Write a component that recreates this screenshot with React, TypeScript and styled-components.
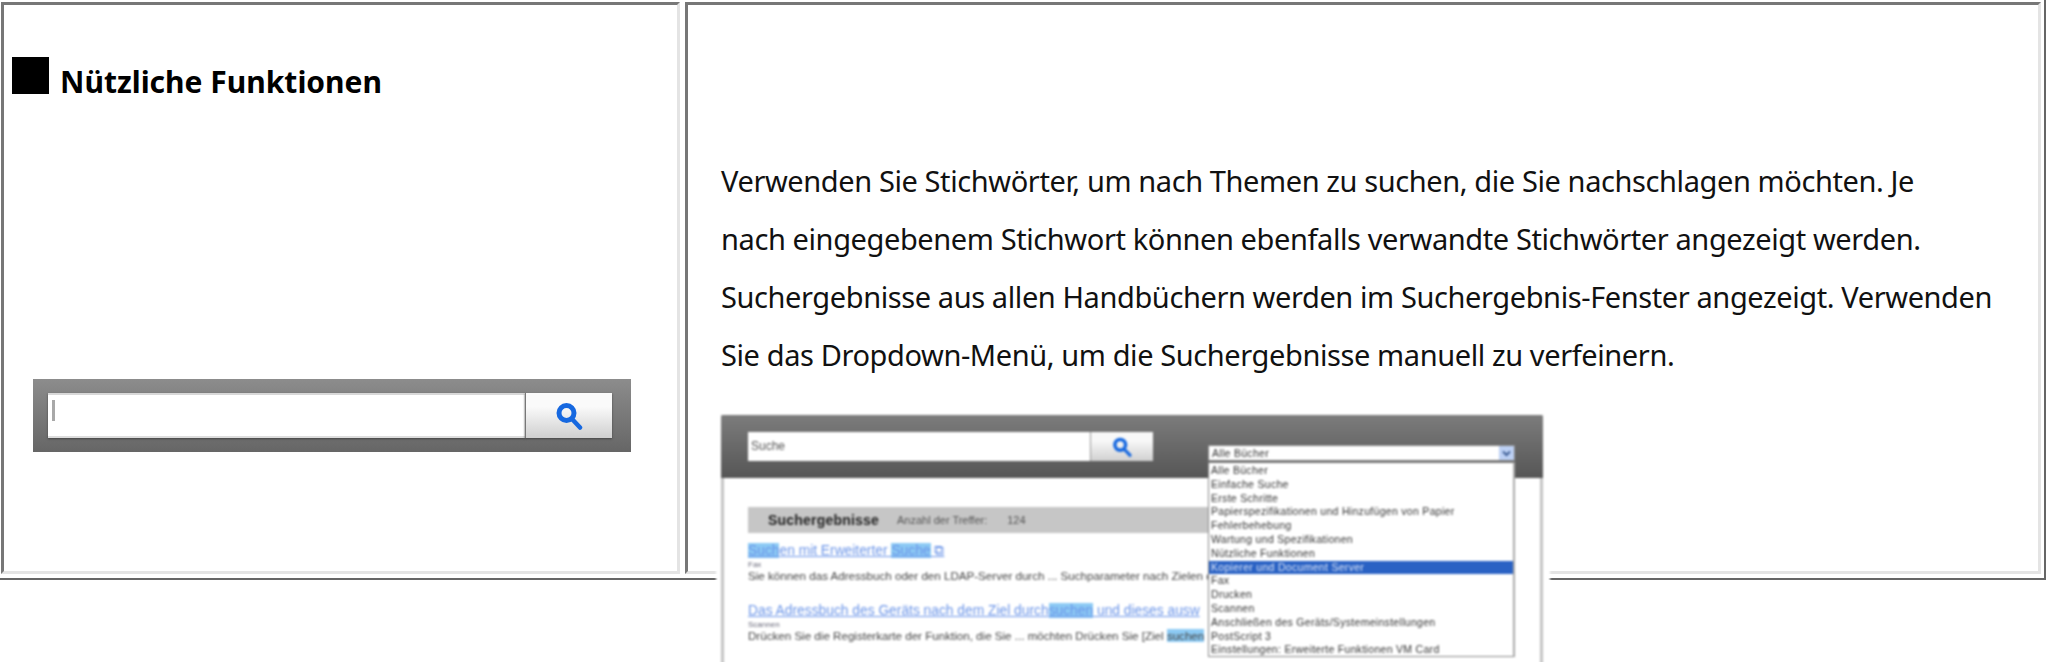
import { createGlobalStyle, styled } from "styled-components";

const GlobalStyle = createGlobalStyle`
html, body {
  margin: 0;
  padding: 0;
  background: #fff;
}
* {
  box-sizing: border-box;
}
`;

const Page = styled.div`
  width: 2048px;
  height: 662px;
  overflow: hidden;
  font-family: "Noto Sans", "Liberation Sans", sans-serif;
  color: #111;
`;

const Frameset = styled.div`
  width: 2046px;
  height: 580px;
  padding: 2px 3px 4px 1px;
  display: flex;
  gap: 5px;
  border-right: 2px solid #666;
  border-bottom: 2px solid #666;
`;

const Frame = styled.section<{ $width: number }>`
  width: ${(p) => p.$width}px;
  height: 572px;
  border-top: 3px solid #777;
  border-left: 3px solid #777;
  border-right: 3px solid #e4e4e4;
  border-bottom: 3px solid #e4e4e4;
`;

const LeftInner = styled.div`
  padding: 52px 0 0 8px;
`;

const Heading = styled.h1`
  margin: 0;
  display: flex;
  align-items: flex-start;
  gap: 11px;
  height: 37px;
  font-size: 30px;
  line-height: 49px;
  font-weight: 700;
  color: #000;
`;

const Square = styled.span`
  width: 37px;
  height: 37px;
  background: #000;
`;

const SearchBar = styled.div`
  margin: 285px 0 0 21px;
  width: 598px;
  height: 73px;
  padding: 14px 19px 14px 15px;
  display: flex;
  background: linear-gradient(#8c8c8c, #666);
  filter: blur(0.4px);
`;

const SearchInput = styled.div`
  flex: 1;
  padding: 5px 0 0 4px;
  background: #fff;
  border-top: 2px solid #d8d8d8;
  border-bottom: 2px solid #ddd;
  box-shadow: 0 1px 2px #444;
`;

const Caret = styled.div`
  width: 3px;
  height: 21px;
  background: #a8a8a8;
`;

const SearchButton = styled.div`
  width: 87px;
  display: flex;
  align-items: center;
  justify-content: center;
  background: linear-gradient(#fafafa 30%, #cfcfcf);
  border-left: 1px solid #777;
  box-shadow: 0 1px 2px #444;
`;

const RightInner = styled.div`
  padding: 147px 0 0 33px;
`;

const Paragraph = styled.p`
  margin: 0;
  font-size: 29px;
  line-height: 58px;
  white-space: nowrap;
  letter-spacing: -0.4px;
`;

const ShotOuter = styled.div`
  position: relative;
  z-index: 1;
  margin: 26px 0 0 -5px;
  width: 834px;
  height: 260px;
  padding: 5px 7px 0 5px;
  background: #fff;
  filter: blur(0.8px);
  font-family: "Liberation Sans", sans-serif;
`;

const ShotWindow = styled.div`
  position: relative;
  height: 260px;
  border-left: 3px solid #c4c4c4;
  border-right: 3px solid #c4c4c4;
`;

const ShotHeader = styled.div`
  height: 63px;
  margin: 0 -3px;
  padding: 17px 0 0 27px;
  background: linear-gradient(#7c7c7c, #565656);
  border-radius: 2px 2px 0 0;
`;

const ShotSearch = styled.div`
  width: 405px;
  height: 29px;
  display: flex;
`;

const ShotInput = styled.div`
  flex: 1;
  padding-left: 3px;
  background: #fff;
  font-size: 12px;
  line-height: 29px;
  color: #555;
`;

const ShotButton = styled.div`
  width: 63px;
  display: flex;
  align-items: center;
  justify-content: center;
  background: linear-gradient(#f8f8f8 30%, #d0d0d0);
  border-left: 1px solid #999;
`;

const ShotBody = styled.div`
  padding: 29px 0 0 24px;
`;

const ResultBar = styled.div`
  width: 750px;
  height: 26px;
  padding-left: 20px;
  display: flex;
  align-items: center;
  gap: 18px;
  background: #c6c6c6;
  font-size: 11px;
  color: #555;
`;

const ResultTitle = styled.b`
  font-size: 14px;
  color: #222;
  letter-spacing: 0.2px;
`;

const ResultCount = styled.span`
  margin-left: 2px;
`;

const Result = styled.div`
  margin-top: 9px;
  white-space: nowrap;
  & + & {
    margin-top: 19px;
  }
`;

const ResultLink = styled.div`
  font-size: 13.8px;
  line-height: 18px;
  color: #6a94e8;
  text-decoration: underline;
`;

const Mark = styled.span`
  background: #8ccaf4;
`;

const ResultType = styled.div`
  font-size: 8px;
  line-height: 9px;
  color: #667;
`;

const ResultText = styled.div`
  font-size: 11.6px;
  line-height: 14px;
  color: #444;
`;

const Select = styled.div`
  position: absolute;
  left: 484px;
  top: 30px;
  width: 307px;
  font-size: 10.5px;
  letter-spacing: 0.3px;
  color: #333;
`;

const SelectBox = styled.div`
  height: 16px;
  display: flex;
  justify-content: space-between;
  padding-left: 3px;
  line-height: 14px;
  background: #fff;
  border: 1px solid #888;
`;

const SelectArrow = styled.span`
  width: 15px;
  display: flex;
  align-items: center;
  justify-content: center;
  background: #bcd0f4;
`;

const SelectList = styled.ul`
  margin: 1px 0 0;
  padding: 1px 0 0;
  list-style: none;
  height: 195px;
  overflow: hidden;
  background: #fff;
  border: 1px solid #888;
  border-right: 2px solid #aaa;
`;

const SelectItem = styled.li<{ $active?: boolean }>`
  height: 13.8px;
  padding-left: 2px;
  line-height: 13.8px;
  white-space: nowrap;
  background: ${(p) => (p.$active ? "#2a62c4" : "transparent")};
  color: ${(p) => (p.$active ? "#dde6f8" : "#333")};
`;

function Lens({ size }: { size: number }) {
  return (
    <svg width={size} height={size} viewBox="0 0 28 28" fill="none" stroke="#1668e0">
      <circle cx="11.5" cy="11" r="7.5" strokeWidth="5" />
      <path d="M17.5 17.5 L25 25.5" strokeWidth="4.5" strokeLinecap="round" />
    </svg>
  );
}

function Chevron() {
  return (
    <svg width="9" height="7" viewBox="0 0 9 7" fill="none" stroke="#3f5f96" strokeWidth="2">
      <path d="M1 1.5 L4.5 5 L8 1.5" />
    </svg>
  );
}

const books = [
  "Alle Bücher",
  "Einfache Suche",
  "Erste Schritte",
  "Papierspezifikationen und Hinzufügen von Papier",
  "Fehlerbehebung",
  "Wartung und Spezifikationen",
  "Nützliche Funktionen",
  "Kopierer und Document Server",
  "Fax",
  "Drucken",
  "Scannen",
  "Anschließen des Geräts/Systemeinstellungen",
  "PostScript 3",
  "Einstellungen: Erweiterte Funktionen VM Card",
];

export default function App() {
  return (
    <Page>
      <GlobalStyle />
      <Frameset>
        <Frame $width={679}>
          <LeftInner>
            <Heading>
              <Square />
              Nützliche Funktionen
            </Heading>
            <SearchBar>
              <SearchInput>
                <Caret />
              </SearchInput>
              <SearchButton>
                <Lens size={28} />
              </SearchButton>
            </SearchBar>
          </LeftInner>
        </Frame>
        <Frame $width={1356}>
          <RightInner>
            <Paragraph>
              Verwenden Sie Stichwörter, um nach Themen zu suchen, die Sie nachschlagen möchten. Je
              <br />
              nach eingegebenem Stichwort können ebenfalls verwandte Stichwörter angezeigt werden.
              <br />
              Suchergebnisse aus allen Handbüchern werden im Suchergebnis-Fenster angezeigt. Verwenden
              <br />
              Sie das Dropdown-Menü, um die Suchergebnisse manuell zu verfeinern.
            </Paragraph>
            <ShotOuter>
              <ShotWindow>
                <ShotHeader>
                  <ShotSearch>
                    <ShotInput>Suche</ShotInput>
                    <ShotButton>
                      <Lens size={20} />
                    </ShotButton>
                  </ShotSearch>
                </ShotHeader>
                <ShotBody>
                  <ResultBar>
                    <ResultTitle>Suchergebnisse</ResultTitle>
                    <span>Anzahl der Treffer:</span>
                    <ResultCount>124</ResultCount>
                  </ResultBar>
                  <Result>
                    <ResultLink>
                      <Mark>Such</Mark>en mit Erweiterter <Mark>Suche</Mark> ⧉
                    </ResultLink>
                    <ResultType>Fax</ResultType>
                    <ResultText>
                      Sie können das Adressbuch oder den LDAP-Server durch ... Suchparameter nach Zielen d
                    </ResultText>
                  </Result>
                  <Result>
                    <ResultLink>
                      Das Adressbuch des Geräts nach dem Ziel durch<Mark>suchen</Mark> und dieses ausw
                    </ResultLink>
                    <ResultType>Scannen</ResultType>
                    <ResultText>
                      Drücken Sie die Registerkarte der Funktion, die Sie ... möchten Drücken Sie [Ziel{" "}
                      <Mark>suchen</Mark>
                    </ResultText>
                  </Result>
                </ShotBody>
                <Select>
                  <SelectBox>
                    Alle Bücher
                    <SelectArrow>
                      <Chevron />
                    </SelectArrow>
                  </SelectBox>
                  <SelectList>
                    {books.map((b) => (
                      <SelectItem key={b} $active={b.startsWith("Kopierer")}>
                        {b}
                      </SelectItem>
                    ))}
                  </SelectList>
                </Select>
              </ShotWindow>
            </ShotOuter>
          </RightInner>
        </Frame>
      </Frameset>
    </Page>
  );
}
